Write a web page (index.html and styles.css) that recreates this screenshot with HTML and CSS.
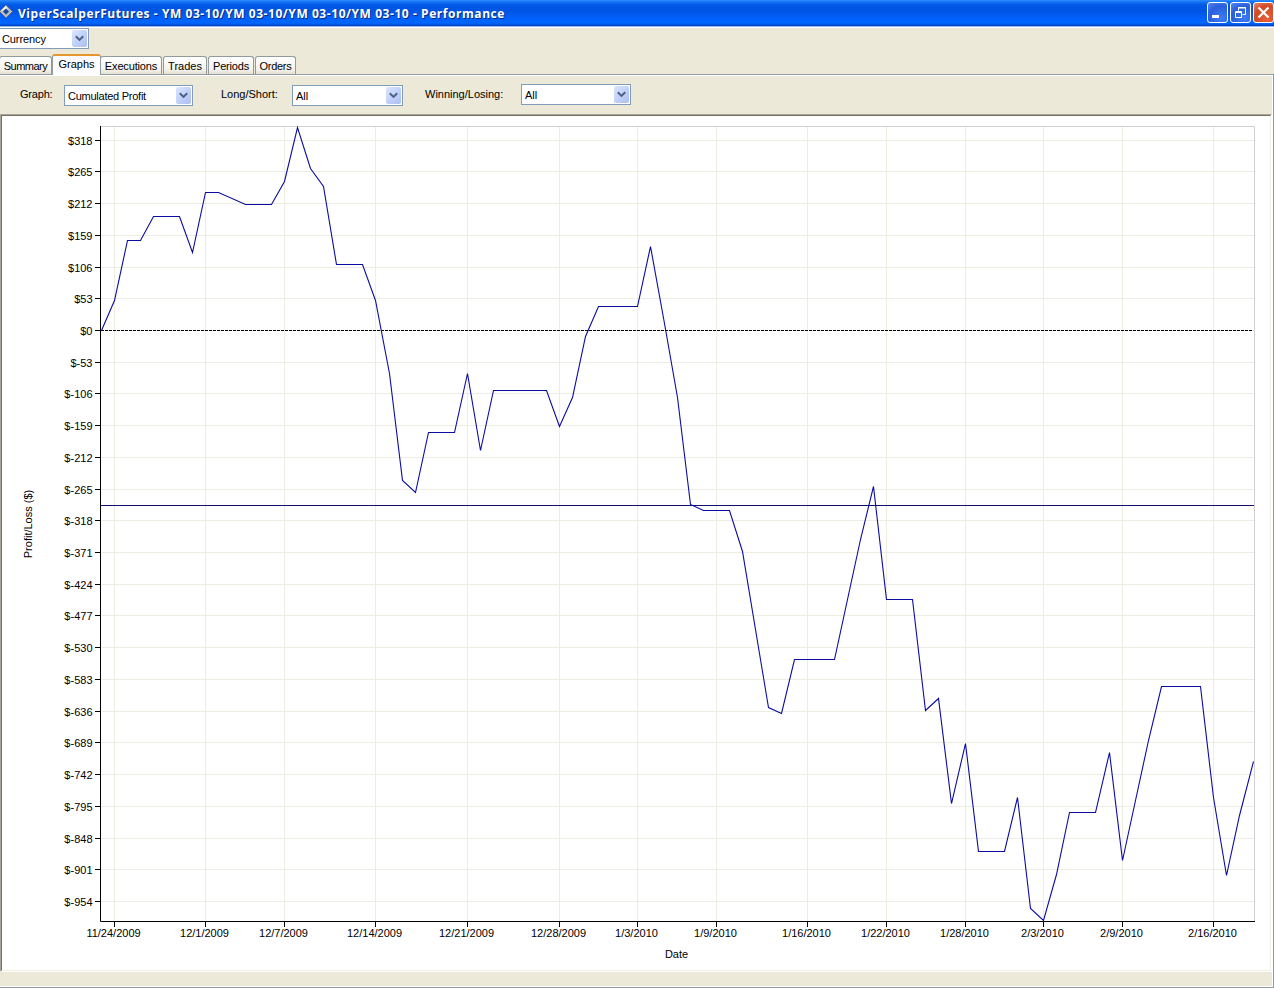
FILE: index.html
```
<!DOCTYPE html>
<html lang="en">
<head>
  <meta charset="UTF-8" />
  <title>ViperScalperFutures - Performance</title>
  <link rel="stylesheet" href="styles.css">
</head>
<body>
  <header class="titlebar">
    <svg class="app-icon" width="14" height="16" viewBox="0 0 14 16">
      <path d="M6 1 L12.5 7.5 L6 14 L-0.5 7.5 Z" fill="#b9bcc0" stroke="#5e6670" stroke-width="0.8" />
      <path d="M6 1.5 L8 6 L12 7.5 L6 5 L0 7.5 Z" fill="#f4f4f4" />
      <path d="M6 4.5 L9 7.5 L6 10.5 L3 7.5 Z" fill="#164a9c" />
    </svg>
    <h1>ViperScalperFutures - YM 03-10/YM 03-10/YM 03-10/YM 03-10 - Performance</h1>
    <div class="window-buttons">
      <button class="win-btn" aria-label="Minimize">
        <svg width="19" height="19"><rect x="4" y="12" width="7" height="3" fill="#fff" /></svg>
      </button>
      <button class="win-btn" aria-label="Restore">
        <svg width="19" height="19" fill="none" stroke="#fff">
          <path d="M7.5 7.5 V4.5 H14.5 V11.5 H11.5 M7 5 H15" />
          <path d="M4.5 8.5 H10.5 V14.5 H4.5 Z M4 9.5 H11" />
        </svg>
      </button>
      <button class="win-btn close" aria-label="Close">
        <svg width="19" height="19" stroke="#fff" stroke-width="2.2"><path d="M4.5 4.5 L14.5 14.5 M14.5 4.5 L4.5 14.5" /></svg>
      </button>
    </div>
  </header>

  <div class="toolbar">
    <div class="combo combo-currency"><span>Currency</span><i class="arrow"><svg width="9" height="7"><path d="M0.8 1.2 L4.5 4.9 L8.2 1.2" /></svg></i></div>
  </div>

  <nav class="tabs">
    <a class="tab summary">Summary</a>
    <a class="tab active">Graphs</a>
    <a class="tab executions">Executions</a>
    <a class="tab trades">Trades</a>
    <a class="tab periods">Periods</a>
    <a class="tab orders">Orders</a>
  </nav>

  <main class="page">
    <div class="filters">
      <label class="graph-label">Graph:</label>
      <div class="combo combo-graph"><span>Cumulated Profit</span><i class="arrow"><svg width="9" height="7"><path d="M0.8 1.2 L4.5 4.9 L8.2 1.2" /></svg></i></div>
      <label class="side-label">Long/Short:</label>
      <div class="combo combo-side"><span>All</span><i class="arrow"><svg width="9" height="7"><path d="M0.8 1.2 L4.5 4.9 L8.2 1.2" /></svg></i></div>
      <label class="result-label">Winning/Losing:</label>
      <div class="combo combo-result"><span>All</span><i class="arrow"><svg width="9" height="7"><path d="M0.8 1.2 L4.5 4.9 L8.2 1.2" /></svg></i></div>
    </div>
    <div class="chart-panel">
      <svg id="chart" width="1268" height="854" viewBox="2 116 1268 854"></svg>
    </div>
  </main>

  <script src="chart.js"></script>
</body>
</html>
```

FILE: styles.css
```
body {
  margin: 0;
  width: 1274px;
  height: 988px;
  overflow: hidden;
  display: flex;
  flex-direction: column;
  background: #ece9d8;
  color: #000;
  font-family: "Liberation Sans", Arial, sans-serif;
  font-size: 11px;
}

.titlebar {
  display: flex;
  align-items: center;
  box-sizing: border-box;
  height: 28px;
  padding-bottom: 2px;
  border-bottom: 1px solid #fff;
  background: linear-gradient(#2f8bff 0, #1373f5 2px, #0259e3 5px, #0054e3 11px, #0060fa 18px, #0066ff 23px, #0050d8 25px, #003dbb 26px, #9db9e6 26px);
}

.app-icon {
  display: block;
  margin-top: -1px;
}

.titlebar h1 {
  margin: 2px 0 0 4px;
  flex: 1;
  color: #fff;
  font: bold 12px/16px "Open Sans", sans-serif;
  letter-spacing: 0.56px;
  white-space: nowrap;
  text-shadow: 1px 1px 0 #0a2a80;
}

.window-buttons {
  display: flex;
  gap: 2px;
}

.win-btn {
  box-sizing: border-box;
  width: 21px;
  height: 21px;
  padding: 0;
  border: 1px solid #fff;
  border-radius: 3px;
  background: radial-gradient(circle at 70% 80%, #3c7cf5, #2a5fdc 60%, #5588ee);
}

.win-btn svg {
  display: block;
}

.win-btn.close {
  background: radial-gradient(circle at 70% 80%, #e8603a, #d24a25 60%, #e88a70);
}

.toolbar {
  height: 26px;
}

.combo {
  display: flex;
  align-items: center;
  box-sizing: border-box;
  height: 21px;
  padding: 1px;
  border: 1px solid #7f9db9;
  background: #fff;
}

.combo span {
  flex: 1;
  padding-left: 2px;
  white-space: nowrap;
}

.arrow {
  display: flex;
  align-items: center;
  justify-content: center;
  width: 15px;
  height: 17px;
  border-radius: 2px;
  background: linear-gradient(135deg, #dce6fe, #bccdf8 60%, #aebff0);
}

.arrow path {
  fill: none;
  stroke: #4d6185;
  stroke-width: 2;
}

.combo-currency {
  width: 90px;
  margin-left: -1px;
  letter-spacing: -0.1px;
}

.combo-currency span {
  padding-left: 1px;
}

.tabs {
  display: flex;
  align-items: flex-end;
  height: 20px;
}

.tab {
  box-sizing: border-box;
  height: 18px;
  border: 1px solid #919b9c;
  border-bottom: 0;
  border-radius: 3px 3px 0 0;
  background: linear-gradient(#fff, #f4f3ee 70%, #e4e1d5);
  line-height: 18px;
  text-align: center;
  white-space: nowrap;
}

.tab.active {
  width: 49px;
  height: 21px;
  margin-bottom: -1px;
  border-top: 2px solid #e5972d;
  background: #fcfcfe;
  line-height: 16px;
  position: relative;
}

.summary { width: 53px; margin-left: -1px; letter-spacing: -0.5px; }
.executions { width: 62px; margin-left: -1px; margin-right: 1px; letter-spacing: -0.15px; }
.trades { width: 44px; margin-right: 1px; }
.periods { width: 46px; margin-right: 1px; letter-spacing: -0.2px; }
.orders { width: 41px; letter-spacing: -0.3px; }

.page {
  flex: 1;
  box-sizing: border-box;
  border-top: 1px solid #919b9c;
  border-right: 1px solid #919b9c;
  border-bottom: 1px solid #919b9c;
  box-shadow: inset -1px 0 #fff, inset 0 1px #fff, inset 0 -1px #fff;
}

.filters {
  display: flex;
  align-items: flex-start;
  box-sizing: border-box;
  height: 39px;
  padding-top: 10px;
}

.filters label {
  padding-top: 3px;
  line-height: 13px;
  white-space: nowrap;
}

.graph-label { width: 44px; margin-left: 20px; letter-spacing: -0.2px; }
.side-label { width: 71px; margin-left: 28px; }
.result-label { width: 96px; margin-left: 22px; }
.combo-graph { width: 129px; letter-spacing: -0.25px; }
.combo-side { width: 111px; }
.combo-result { width: 110px; margin-top: -1px; }

.chart-panel {
  box-sizing: border-box;
  width: 1272px;
  height: 858px;
  border: 1px solid;
  border-color: #aca899 #fff #fff #aca899;
  background: #fff;
}

#chart {
  display: block;
  border: 1px solid;
  border-color: #716f64 #f1efe2 #f1efe2 #716f64;
}

.grid {
  stroke: #eeede3;
}

.frame {
  fill: none;
  stroke: #d0d0d0;
}

.axis {
  fill: none;
  stroke: #000;
}

.zero {
  stroke: #000;
  stroke-dasharray: 3 1;
}

.average {
  stroke: #10106e;
}

.profit {
  fill: none;
  stroke: #0c0ca0;
  stroke-width: 1.1;
}
```

FILE: chart.js
```
const svg = document.getElementById('chart');

const yTicks = [140, 171, 203, 235, 267, 298, 330, 362, 393, 425, 457, 489, 520, 552, 584, 615, 647, 679, 711, 742, 774, 806, 838, 869, 901];

const xTicks = [
  [114, '11/24/2009'], [205, '12/1/2009'], [284, '12/7/2009'], [375, '12/14/2009'],
  [467, '12/21/2009'], [559, '12/28/2009'], [637, '1/3/2010'], [716, '1/9/2010'],
  [807, '1/16/2010'], [886, '1/22/2010'], [965, '1/28/2010'], [1043, '2/3/2010'],
  [1122, '2/9/2010'], [1213, '2/16/2010']
];

const profit = [
  [101, 330], [114, 300], [127, 240], [140, 240], [153, 216], [179, 216], [192, 252],
  [205, 192], [218, 192], [245, 204], [271, 204], [284, 181], [297, 127], [310, 168],
  [323, 186], [336, 264], [362, 264], [375, 300], [389, 373], [402, 480], [415, 492],
  [428, 432], [454, 432], [467, 373], [480, 450], [493, 390], [546, 390], [559, 426],
  [572, 397], [585, 336], [598, 306], [637, 306], [650, 246], [664, 323], [677, 397],
  [690, 504], [703, 510], [729, 510], [742, 551], [768, 707], [781, 713], [794, 659],
  [834, 659], [847, 599], [860, 539], [873, 486], [886, 599], [912, 599], [925, 710],
  [938, 698], [951, 803], [965, 743], [978, 851], [1004, 851], [1017, 797], [1030, 908],
  [1043, 920], [1056, 874], [1069, 812], [1095, 812], [1109, 752], [1122, 860],
  [1135, 800], [1148, 740], [1161, 686], [1200, 686], [1213, 797], [1226, 875],
  [1239, 815], [1253, 761]
];

let out = '';

// grid first so the axes and the series sit on top
yTicks.forEach(y => out += `<path class="grid" d="M101 ${y + 0.5} H1254" />`);
xTicks.forEach(([x]) => out += `<path class="grid" d="M${x + 0.5} 127 V921" />`);
out += '<path class="frame" d="M101 126.5 H1254.5 V921" />';
out += '<path class="axis" d="M100.5 126 V921.5 H1255" />';

yTicks.forEach((y, i) => {
  const value = 318 - i * 53;
  out += `<path class="axis" d="M95 ${y + 0.5} H100" />`;
  out += `<text x="92.5" y="${y + 5}" text-anchor="end">$${value}</text>`;
});

xTicks.forEach(([x, date]) => {
  out += `<path class="axis" d="M${x + 0.5} 922 V927" />`;
  out += `<text x="${x - 0.5}" y="937" text-anchor="middle">${date}</text>`;
});

out += '<path class="zero" d="M101 330.5 H1253" />';
out += '<path class="average" d="M101 505.5 H1254" />';
out += `<polyline class="profit" points="${profit.map(([x, y]) => `${x + 0.5},${y + 0.5}`).join(' ')}" />`;
out += '<text x="676.5" y="958" text-anchor="middle">Date</text>';
out += '<text transform="translate(32 524) rotate(-90)" text-anchor="middle">Profit/Loss ($)</text>';

svg.innerHTML = out;
```
